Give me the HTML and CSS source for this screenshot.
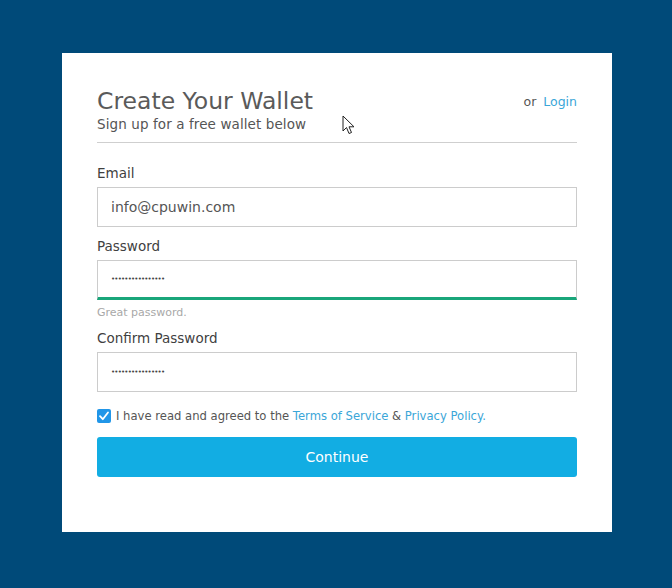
FILE: index.html
```html
<!DOCTYPE html>
<html>
<head>
<meta charset="utf-8">
<link rel="stylesheet" href="styles.css">
</head>
<body>
<div class="card">
  <div class="header">
    <div class="titles">
      <h1 class="title">Create Your Wallet</h1>
      <p class="subtitle">Sign up for a free wallet below</p>
    </div>
    <div class="login">or <a href="#" class="link">Login</a></div>
    <svg class="cursor" width="14" height="21" viewBox="0 0 14 21"><path d="M1 1 L1 16 L4.5 12.5 L7 18.5 L9.5 17.5 L7 11.8 L12 11.8 Z" fill="#fff" stroke="#222" stroke-width="1" stroke-linejoin="round"/></svg>
  </div>
  <form class="form">
    <label class="label">Email</label>
    <div class="input">info@cpuwin.com</div>
    <label class="label">Password</label>
    <div class="input pw strong">&bull;&bull;&bull;&bull;&bull;&bull;&bull;&bull;&bull;&bull;&bull;&bull;&bull;&bull;&bull;&bull;</div>
    <div class="hint">Great password.</div>
    <label class="label">Confirm Password</label>
    <div class="input pw">&bull;&bull;&bull;&bull;&bull;&bull;&bull;&bull;&bull;&bull;&bull;&bull;&bull;&bull;&bull;&bull;</div>
    <div class="agree">
      <span class="check"><svg width="14" height="14" viewBox="0 0 14 14"><path d="M3 7.2 L5.8 10.2 L11 3.5" fill="none" stroke="#fff" stroke-width="1.8" stroke-linecap="round" stroke-linejoin="round"/></svg></span>
      <span>I have read and agreed to the <a href="#" class="link">Terms of Service</a> &amp; <a href="#" class="link">Privacy Policy.</a></span>
    </div>
    <button type="button" class="btn">Continue</button>
  </form>
</div>
</body>
</html>
```
FILE: styles.css
```css
html, body { margin: 0; padding: 0; }
body {
  background: #004a79;
  width: 672px;
  height: 588px;
  font-family: "DejaVu Sans", "Open Sans", sans-serif;
  color: #4a4a4a;
  padding-top: 53px;
  box-sizing: border-box;
}
.card {
  background: #fff;
  width: 550px;
  height: 479px;
  margin-left: 62px;
  box-sizing: border-box;
  padding: 33px 35px 0 35px;
}
.header {
  display: flex;
  justify-content: space-between;
  align-items: flex-start;
  border-bottom: 1px solid #cfcfcf;
  padding-bottom: 10px;
  position: relative;
}
.title {
  margin: 0;
  font-weight: 400;
  font-size: 23.5px;
  line-height: 30px;
  color: #5a5a5a;
  letter-spacing: 0;
}
.subtitle {
  margin: 0;
  font-size: 13.5px;
  line-height: 16px;
  color: #555;
  font-weight: 400;
  letter-spacing: 0.1px;
}
.login {
  font-size: 12.5px;
  color: #555;
  padding-top: 8px;
  word-spacing: 3px;
}
.link { color: #3aa6d8; text-decoration: none; word-spacing: 0; }
.cursor { position: absolute; left: 245px; top: 29px; }
.form { display: flex; flex-direction: column; padding-top: 22px; }
.label {
  font-size: 13.5px;
  color: #3f3f3f;
  line-height: 17px;
  margin-bottom: 5px;
}
.input {
  height: 40px;
  box-sizing: border-box;
  border: 1px solid #cccccc;
  padding: 0 13px;
  display: flex;
  align-items: center;
  font-size: 14px;
  color: #555;
  margin-bottom: 11px;
}
.pw { font-size: 7px; letter-spacing: -0.8px; color: #444; }
.strong { border-bottom: 3px solid #19a67a; margin-bottom: 4px; }
.hint { font-size: 11px; color: #a8a8a8; margin-bottom: 9px; line-height: 17px; }
.agree {
  display: flex;
  align-items: center;
  gap: 5px;
  font-size: 11.6px;
  color: #555;
  margin-top: 5px;
  margin-bottom: 13px;
  line-height: 16px;
}
.check {
  width: 14px;
  height: 14px;
  border-radius: 2px;
  background: #2196e8;
  display: flex;
}
.btn {
  height: 40px;
  border: none;
  border-radius: 3px;
  background: #12ade3;
  color: #fff;
  font-family: inherit;
  font-size: 14px;
}
```
